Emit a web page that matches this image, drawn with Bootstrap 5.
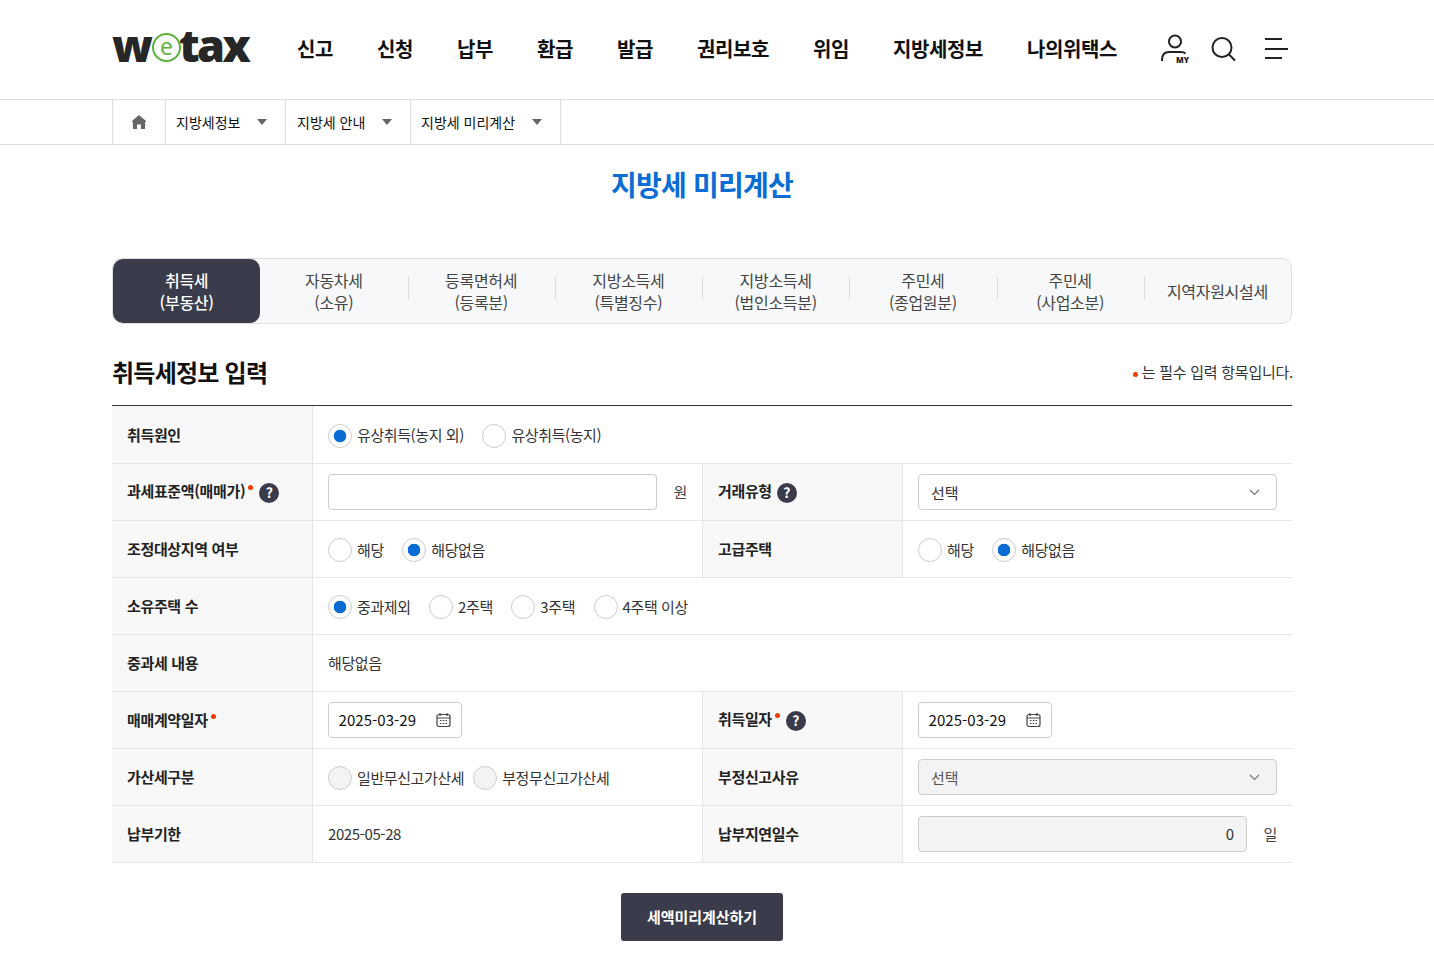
<!DOCTYPE html>
<html lang="ko"><head><meta charset="utf-8"><title>지방세 미리계산</title>
<link rel="stylesheet" href="https://cdn.jsdelivr.net/npm/bootstrap@5.3.0/dist/css/bootstrap.min.css">
<style>
body{font-family:"Noto Sans CJK KR","Noto Sans",sans-serif;color:#222;font-size:15px;background:#fff}
.wrapx{width:1180px;margin:0 0 0 112px}
.hdr{height:100px;border-bottom:1px solid #ddd}
.logo{font-family:"Open Sans",sans-serif;font-weight:800;font-size:45px;line-height:1;color:#262626;width:185px;margin-bottom:11px}
.logo-tax{letter-spacing:-2.6px}
.logo-e{display:flex;align-items:center;justify-content:center;width:29px;height:29px;margin:7px -2px 0 -1px;flex:none;border:2px solid #5cb23d;border-radius:50%;background:#fff;color:#5cb23d;font-size:23px;font-weight:400;line-height:1;padding-bottom:3px}
.mainnav{gap:44px;font-size:20px;font-weight:700;letter-spacing:-.4px;color:#111;margin-bottom:2px}
.mainnav a{color:inherit;text-decoration:none;white-space:nowrap}
.crumbs{height:45px;border-bottom:1px solid #ddd}
.crumb-cell{border-right:1px solid #ddd;height:44px;font-size:14px;color:#111;padding-left:10px;white-space:nowrap}
.crumb-home{border-left:1px solid #ddd;padding:0;justify-content:center;width:54px}
.c1{width:120px}.c2{width:125px}.c3{width:150px}
.caret-x{width:0;height:0;border-left:5px solid transparent;border-right:5px solid transparent;border-top:6px solid #666;margin-left:auto;margin-right:18px}
.ptitle{font-size:28px;font-weight:700;color:#0a6cd4;text-align:center;margin:0;padding-top:18px;line-height:42px;letter-spacing:-.8px;height:113px}
.tabsx{height:66px;border:1px solid #ddd;border-radius:10px;background:#f7f8fa}
.tabx{flex:1 1 0;text-align:center;font-size:16px;line-height:22px;color:#444;position:relative;letter-spacing:-.3px}
.tabx+.tabx:not(.t2)::before{content:"";position:absolute;left:0;top:18px;height:22px;border-left:1px solid #ddd}
.tabx.on{background:#3a3b4b;color:#fff;border-radius:10px;font-weight:500}
.sechead{height:82px;padding-top:16px;border-bottom:1px solid #333}
.sechead h2{font-size:24px;font-weight:700;margin:0;color:#111;letter-spacing:-.75px}
.reqnote{font-size:15px;color:#333;letter-spacing:-.25px;margin-right:-1px;margin-top:-1px}
.dotx{display:inline-block;width:5px;height:5px;border-radius:50%;background:#f03c00}
.reqnote .dotx{margin-right:4px;vertical-align:1px}
.formtb{table-layout:fixed;width:1180px;margin:0;border-collapse:separate;border-spacing:0}
.formtb th,.formtb td{height:57px;padding:0 15px;border-bottom:1px solid #e6e6e6;vertical-align:middle;background:#fff;color:#333;font-size:15px;letter-spacing:-.4px;box-shadow:none}
.formtb tr:first-child>*{height:58px}
.formtb tr:first-child .th-in{padding-top:2px}
.formtb th{background:#f8f8f8;border-right:1px solid #e6e6e6;font-weight:700;color:#222;letter-spacing:-.35px;white-space:nowrap}
.formtb th.mid{border-left:1px solid #e6e6e6}
.th-in{display:flex;align-items:center}
.th-in.th-q{padding-bottom:2px}
.th-in .dotx{margin:0 0 7px 3px;flex:none}
.qmark{display:inline-flex;flex:none;width:20px;height:20px;border-radius:50%;background:#3a3b4b;color:#fff;font-size:14px;font-weight:700;align-items:center;justify-content:center;margin-left:5px;margin-top:3px;letter-spacing:0}
.dotx+.qmark{margin-left:6px}
.radiosx{display:flex;align-items:center;gap:18.500px;margin-top:2px}
.radiosx.tightx{gap:9px}
.radx{display:flex;align-items:center;gap:5px;white-space:nowrap;margin:0}
.radx .form-check-input{width:24px;height:24px;margin:0;border:1px solid #ccc;flex:none;background-color:#fff;background-image:none}
.radx .form-check-input:checked{background-color:#fff;border-color:#ccc;background-image:radial-gradient(circle,#0a6cd4 0,#0a6cd4 6px,transparent 6.6px)}
.radx .form-check-input:disabled{background-color:#f3f3f3;opacity:1}
.fieldx{height:36px;border:1px solid #ccc;border-radius:4px;font-size:15px;color:#333;padding:0 12px;box-shadow:none;letter-spacing:-.1px}
.selx{padding:2px 30px 0 12px;background-position:right 16px center;background-size:11px 8px;background-image:url("data:image/svg+xml,%3Csvg xmlns='http://www.w3.org/2000/svg' viewBox='0 0 11 8'%3E%3Cpath d='M1 2l4.5 4.5L10 2' fill='none' stroke='%23777' stroke-width='1.2'/%3E%3C/svg%3E")}
.selx:disabled{background-color:#f3f3f3;color:#555}
.datex{display:flex;align-items:center;justify-content:space-between;width:134px;height:36px;border:1px solid #ccc;border-radius:4px;padding:0 10px 0 9.500px;color:#111;letter-spacing:.05px}
.unitx{color:#444;font-size:15px;flex:none}
.amt{width:329px}
.ro{background:#f3f3f3!important;text-align:right;width:329px;color:#333;padding-bottom:2px}
.runbtn{width:162px;height:48px;background:#3a3b4b;color:#fff;border:0;border-radius:3px;font-size:15px;font-weight:700;letter-spacing:-.05px}
.runbtn:hover{background:#3a3b4b;color:#fff}
.btnrow{padding-top:30px}
.tools{padding-right:4px;margin-top:-2px}
.c2x{padding-left:11px}
</style></head><body>
<header class="hdr"><div class="wrapx d-flex align-items-center h-100">
 <div class="logo d-flex align-items-center"><span>w</span><span class="logo-e">e</span><span class="logo-tax">tax</span></div>
 <nav class="mainnav d-flex"><a href="#">신고</a><a href="#">신청</a><a href="#">납부</a><a href="#">환급</a><a href="#">발급</a><a href="#">권리보호</a><a href="#">위임</a><a href="#">지방세정보</a><a href="#">나의위택스</a></nav>
 <div class="tools d-flex align-items-center ms-auto">
  <svg width="30" height="30" viewBox="0 0 30 30" fill="none" stroke="#222" stroke-width="2"><circle cx="15" cy="7.500" r="6"/><path d="M2 27v-1c0-5 2-8 7-8h12c2 0 3.500.5 4.500 1.500"/><text x="16" y="29" font-family="Open Sans" font-weight="800" font-size="8" fill="#222" stroke="none">MY</text></svg>
  <svg style="margin-left:21px" width="26" height="26" viewBox="0 0 26 26" fill="none" stroke="#222" stroke-width="2"><circle cx="11" cy="11.500" r="9.500"/><path d="M18 18.500l6 6"/></svg>
  <svg style="margin-left:27px" width="24" height="22" viewBox="0 0 24 22" fill="none" stroke="#222" stroke-width="2"><path d="M1 1h17M1 11h23M1 20h17"/></svg>
 </div>
</div></header>
<div class="crumbs"><div class="wrapx d-flex">
 <div class="crumb-cell crumb-home d-flex align-items-center"><svg width="14" height="14" viewBox="0 0 14 14"><path d="M7 0l7 6v1l-1 0v7H9V9.500H5V14H1V7L0 7V6z" fill="#666"/></svg></div>
 <div class="crumb-cell c1 d-flex align-items-center">지방세정보<span class="caret-x"></span></div>
 <div class="crumb-cell c2 c2x d-flex align-items-center">지방세 안내<span class="caret-x"></span></div>
 <div class="crumb-cell c3 d-flex align-items-center">지방세 미리계산<span class="caret-x"></span></div>
</div></div>
<main class="wrapx">
 <h1 class="ptitle">지방세 미리계산</h1>
 <div class="tabsx d-flex">
  <div class="tabx on d-flex align-items-center justify-content-center"><span>취득세<br>(부동산)</span></div>
  <div class="tabx t2 d-flex align-items-center justify-content-center"><span>자동차세<br>(소유)</span></div>
  <div class="tabx d-flex align-items-center justify-content-center"><span>등록면허세<br>(등록분)</span></div>
  <div class="tabx d-flex align-items-center justify-content-center"><span>지방소득세<br>(특별징수)</span></div>
  <div class="tabx d-flex align-items-center justify-content-center"><span>지방소득세<br>(법인소득분)</span></div>
  <div class="tabx d-flex align-items-center justify-content-center"><span>주민세<br>(종업원분)</span></div>
  <div class="tabx d-flex align-items-center justify-content-center"><span>주민세<br>(사업소분)</span></div>
  <div class="tabx d-flex align-items-center justify-content-center"><span>지역자원시설세</span></div>
 </div>
 <div class="sechead d-flex align-items-center justify-content-between"><h2>취득세정보 입력</h2><div class="reqnote"><span class="dotx"></span>는 필수 입력 항목입니다.</div></div>
 <table class="table formtb">
  <colgroup><col style="width:201px"><col style="width:389px"><col style="width:201px"><col style="width:389px"></colgroup>
  <tbody>
  <tr><th><div class="th-in">취득원인</div></th><td colspan="3"><div class="radiosx"><label class="radx"><input class="form-check-input" type="radio" name="a" checked>유상취득(농지 외)</label><label class="radx"><input class="form-check-input" type="radio" name="a">유상취득(농지)</label></div></td></tr>
  <tr><th><div class="th-in th-q">과세표준액(매매가)<span class="dotx"></span><span class="qmark">?</span></div></th><td><div class="d-flex align-items-center justify-content-between"><input class="form-control fieldx amt" type="text"><span class="unitx">원</span></div></td>
   <th class="mid"><div class="th-in th-q">거래유형<span class="qmark">?</span></div></th><td><select class="form-select fieldx selx"><option>선택</option></select></td></tr>
  <tr><th><div class="th-in">조정대상지역 여부</div></th><td><div class="radiosx"><label class="radx"><input class="form-check-input" type="radio" name="b">해당</label><label class="radx"><input class="form-check-input" type="radio" name="b" checked>해당없음</label></div></td>
   <th class="mid"><div class="th-in">고급주택</div></th><td><div class="radiosx"><label class="radx"><input class="form-check-input" type="radio" name="c">해당</label><label class="radx"><input class="form-check-input" type="radio" name="c" checked>해당없음</label></div></td></tr>
  <tr><th><div class="th-in">소유주택 수</div></th><td colspan="3"><div class="radiosx"><label class="radx"><input class="form-check-input" type="radio" name="d" checked>중과제외</label><label class="radx"><input class="form-check-input" type="radio" name="d">2주택</label><label class="radx"><input class="form-check-input" type="radio" name="d">3주택</label><label class="radx"><input class="form-check-input" type="radio" name="d">4주택 이상</label></div></td></tr>
  <tr><th><div class="th-in">중과세 내용</div></th><td colspan="3">해당없음</td></tr>
  <tr><th><div class="th-in">매매계약일자<span class="dotx"></span></div></th><td><div class="datex">2025-03-29<svg width="15" height="16" viewBox="0 0 15 16" fill="none" stroke="#444" stroke-width="1.2"><rect x="1" y="2.500" width="13" height="12" rx="2"/><path d="M4 1v3M11 1v3M1 6h13"/><path d="M4 8.500h1.500M6.800 8.500h1.500M9.500 8.500h1.500M4 11.500h1.500M6.800 11.500h1.500M9.500 11.500h1.500"/></svg></div></td>
   <th class="mid"><div class="th-in th-q">취득일자<span class="dotx"></span><span class="qmark">?</span></div></th><td><div class="datex">2025-03-29<svg width="15" height="16" viewBox="0 0 15 16" fill="none" stroke="#444" stroke-width="1.2"><rect x="1" y="2.500" width="13" height="12" rx="2"/><path d="M4 1v3M11 1v3M1 6h13"/><path d="M4 8.500h1.500M6.800 8.500h1.500M9.500 8.500h1.500M4 11.500h1.500M6.800 11.500h1.500M9.500 11.500h1.500"/></svg></div></td></tr>
  <tr><th><div class="th-in">가산세구분</div></th><td><div class="radiosx tightx"><label class="radx"><input class="form-check-input" type="radio" name="e" disabled>일반무신고가산세</label><label class="radx"><input class="form-check-input" type="radio" name="e" disabled>부정무신고가산세</label></div></td>
   <th class="mid"><div class="th-in">부정신고사유</div></th><td><select class="form-select fieldx selx" disabled><option>선택</option></select></td></tr>
  <tr><th><div class="th-in">납부기한</div></th><td>2025-05-28</td>
   <th class="mid"><div class="th-in">납부지연일수</div></th><td><div class="d-flex align-items-center justify-content-between"><input class="form-control fieldx ro" type="text" value="0" readonly><span class="unitx">일</span></div></td></tr>
  </tbody>
 </table>
 <div class="btnrow d-flex justify-content-center"><button class="btn runbtn" type="button">세액미리계산하기</button></div>
</main>
<script src="https://cdn.jsdelivr.net/npm/bootstrap@5.3.0/dist/js/bootstrap.bundle.min.js"></script>
</body></html>
